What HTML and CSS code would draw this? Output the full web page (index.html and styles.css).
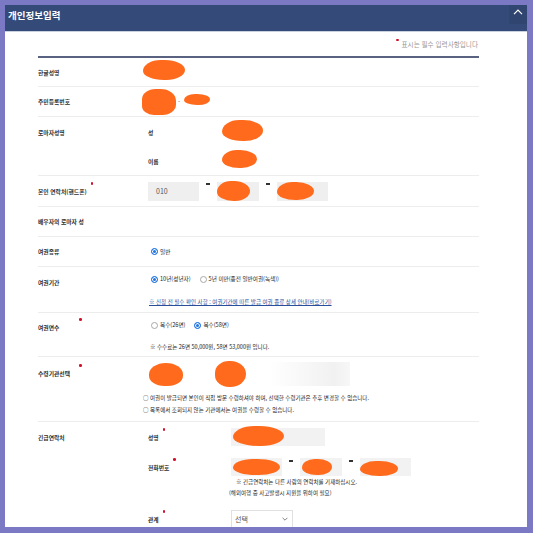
FILE: index.html
```html
<!DOCTYPE html>
<html lang="ko">
<head>
<meta charset="utf-8">
<title>개인정보입력</title>
<link rel="stylesheet" href="styles.css">
</head>
<body>
<section class="panel">
  <header class="panel-head">
    <h2 class="title">개인정보입력</h2>
    <button class="toggle" type="button" aria-label="접기">
      <svg width="10" height="6" viewBox="0 0 10 6"><path d="M1 5.2 L5 1.2 L9 5.2" fill="none" stroke="#ffffff" stroke-width="1.2"/></svg>
    </button>
  </header>
  <div class="panel-body">
    <p class="req-note"><span class="dot"></span>표시는 필수 입력사항입니다</p>
    <div class="form">
      <div class="row r1">
        <div class="label">한글성명</div>
        <div class="value"><div class="line h28"><span class="blob b-kname"></span></div></div>
      </div>
      <div class="row r2">
        <div class="label">주민등록번호</div>
        <div class="value"><div class="line h29"><span class="blob b-rrn1"></span><span class="hy">-</span><span class="blob b-rrn2"></span></div></div>
      </div>
      <div class="row r3">
        <div class="label">로마자성명</div>
        <div class="value">
          <div class="line h30"><span class="sublabel w74">성</span><span class="blob b-sur"></span></div>
          <div class="line h28"><span class="sublabel w74">이름</span><span class="blob b-given"></span></div>
        </div>
      </div>
      <div class="row r4">
        <div class="label req"><span class="txt">본인 연락처(핸드폰)</span></div>
        <div class="value">
          <div class="line h30">
            <span class="box w51"><span class="box-text">010</span></span>
            <span class="dash"></span>
            <span class="box w42"><span class="blob b-ph2"></span></span>
            <span class="dash"></span>
            <span class="box w51"><span class="blob b-ph3"></span></span>
          </div>
        </div>
      </div>
      <div class="row r5">
        <div class="label">배우자의 로마자 성</div>
        <div class="value"></div>
      </div>
      <div class="row r6">
        <div class="label">여권종류</div>
        <div class="value"><div class="line h29"><span class="radio on"></span><span class="opt">일반</span></div></div>
      </div>
      <div class="row r7">
        <div class="label">여권기간</div>
        <div class="value">
          <div class="line h24"><span class="radio on"></span><span class="opt">10년(성년자)</span><span class="radio"></span><span class="opt">5년 미만(종전 일반여권(녹색))</span></div>
          <div class="line h21"><a class="guide" href="#">※ 신청 전 필수 확인 사항 : 여권기간에 따른 발급 여권 종류 상세 안내(바로가기)</a></div>
        </div>
      </div>
      <div class="row r8">
        <div class="label req"><span class="txt">여권면수</span></div>
        <div class="value">
          <div class="line h24"><span class="radio"></span><span class="opt">복수(26면)</span><span class="radio on"></span><span class="opt">복수(58면)</span></div>
          <div class="line h19"><span class="note fee">※ 수수료는 26면 50,000원, 58면 53,000원 입니다.</span></div>
        </div>
      </div>
      <div class="row r9">
        <div class="label req"><span class="txt">수령기관선택</span></div>
        <div class="value pad9">
          <div class="line h24"><span class="office"><span class="blob b-off1"></span><span class="blob b-off2"></span></span></div>
          <div class="notes">
            <p class="note line h12 out5">○ 여권이 발급되면 본인이 직접 방문 수령하셔야 하며, 선택한 수령기관은 추후 변경할 수 없습니다.</p>
            <p class="note line h12 out5">○ 목록에서 조회되지 않는 기관에서는 여권을 수령할 수 없습니다.</p>
          </div>
        </div>
      </div>
      <div class="row r10">
        <div class="label">긴급연락처</div>
        <div class="value pad10">
          <div class="subrow h18">
            <span class="sublabel req"><span class="txt">성명</span></span>
            <span class="line"><span class="box w94 h18b"><span class="blob b-ename"></span></span></span>
          </div>
          <div class="subrow h18 gap12">
            <span class="sublabel req"><span class="txt">전화번호</span></span>
            <span class="line">
              <span class="box w51 h18b"><span class="blob b-e1"></span></span>
              <span class="dash"></span>
              <span class="box w42 h18b"><span class="blob b-e2"></span></span>
              <span class="dash"></span>
              <span class="box w51 h18b"><span class="blob b-e3"></span></span>
            </span>
          </div>
          <div class="subnotes">
            <p class="note line h11 in5">※ 긴급연락처는 다른 사람의 연락처를 기재하십시오.</p>
            <p class="note line h11 out2">(해외여행 중 사고발생시 지원을 위하여 필요)</p>
          </div>
          <div class="subrow h18 gap12">
            <span class="sublabel req"><span class="txt">관계</span></span>
            <span class="line"><span class="select"><span class="sel-text">선택</span><svg width="6" height="4" viewBox="0 0 6 4"><path d="M0.6 0.8 L3 3.2 L5.4 0.8" fill="none" stroke="#777" stroke-width="0.9"/></svg></span></span>
          </div>
        </div>
      </div>
    </div>
  </div>
</section>
</body>
</html>
```
FILE: styles.css
```css
* { box-sizing: border-box; margin: 0; padding: 0; }
html, body { height: 533px; overflow: hidden; }
body {
  background: #7b78c4;
  padding: 5px 6px 0 5px;
  font-family: "Noto Sans CJK KR", "Noto Sans", sans-serif;
  color: #333;
}
.panel {
  height: 522px;
  overflow: hidden;
  background: #fff;
  display: flex;
  flex-direction: column;
}
.panel-head {
  height: 27px;
  flex: none;
  background: #344a79;
  border-bottom: 1px solid #c9d0e0;
  display: flex;
  align-items: flex-start;
  justify-content: space-between;
}
.title {
  font-size: 9.5px;
  line-height: 12px;
  font-weight: 700;
  color: #fff;
  padding: 4px 0 0 3px;
}
.toggle {
  width: 18px;
  height: 19px;
  border: none;
  background: #30456f;
  display: flex;
  align-items: center;
  justify-content: center;
  padding-bottom: 6px;
}
.panel-body {
  flex: 1;
  overflow: hidden;
  padding: 0 48px 0 33px;
}
.req-note {
  height: 24px;
  display: flex;
  justify-content: flex-end;
  align-items: center;
  font-size: 6.6px;
  color: #999;
  padding-right: 1px;
  white-space: nowrap;
}
.req-note .dot {
  width: 2.6px;
  height: 2.6px;
  border-radius: 50%;
  background: #d0112b;
  margin: 0 3px 8px 0;
}
.form { border-top: 2px solid #5a6282; }
.row {
  display: grid;
  grid-template-columns: 110px 1fr;
  align-items: start;
  border-bottom: 1px solid #ededed;
}
.r1 { --lh: 28px; }
.r2, .r5, .r6 { --lh: 29px; }
.r3, .r4, .r7, .r10 { --lh: 30px; }
.r8 { --lh: 28px; }
.r9 { --lh: 32px; }
.label {
  height: var(--lh);
  display: flex;
  align-items: center;
  font-size: 5.8px;
  font-weight: 700;
  color: #2e2e2e;
  white-space: nowrap;
}
.label.req .txt { min-width: 37px; }
.req::after {
  content: "";
  width: 2.6px;
  height: 2.6px;
  border-radius: 50%;
  background: #d0112b;
  margin: 0 0 15px 4px;
  flex: none;
}
.line { display: flex; align-items: center; }
.h11 { height: 11px; }
.h12 { height: 12px; }
.h18 { height: 18px; }
.h19 { height: 19px; }
.h21 { height: 21px; }
.h24 { height: 24px; }
.h28 { height: 28px; }
.h29 { height: 29px; }
.h30 { height: 30px; }
.sublabel {
  font-size: 5.8px;
  font-weight: 700;
  color: #2e2e2e;
  white-space: nowrap;
  display: flex;
  align-items: center;
}
.w74 { width: 74px; }
.blob {
  display: inline-block;
  flex: none;
  background: #ff6a1c;
  border-radius: 42% 48% 45% 50% / 55% 50% 50% 45%;
}
.b-kname { width: 42px; height: 20px; margin: -4px 0 0 -5px; }
.b-rrn1 { width: 34px; height: 26px; margin-left: -6px; border-radius: 40% 45% 40% 35%; }
.b-rrn2 { width: 26px; height: 11px; margin-top: -4px; }
.hy { font-size: 6px; color: #555; margin: 0 4px 0 2px; }
.b-sur { width: 41px; height: 21px; margin-top: -4px; }
.b-given { width: 35px; height: 18px; margin-top: -4px; }
.box {
  height: 19px;
  background: #efefef;
  display: flex;
  align-items: center;
  flex: none;
}
.h18b { height: 18px; background: #f2f2f2; }
.w42 { width: 42px; }
.w51 { width: 51px; }
.w94 { width: 94px; }
.box-text { font-size: 7px; color: #555; padding-left: 8px; }
.dash {
  width: 18px;
  align-self: flex-start;
  display: flex;
  justify-content: center;
  padding-top: 2px;
  flex: none;
}
.dash::before {
  content: "";
  width: 4px;
  height: 1.6px;
  background: #333;
}
.r4 .dash { padding-top: 7px; }
.b-ph2 { width: 33px; height: 20px; margin-top: -1px; }
.b-ph3 { width: 37px; height: 18px; }
.radio {
  width: 7px;
  height: 7px;
  border-radius: 50%;
  border: 1px solid #a8a8a8;
  background: #fff;
  flex: none;
  margin: 0 2px 0 3px;
}
.radio.on {
  background: #1f74e0;
  border-color: #1f74e0;
  box-shadow: inset 0 0 0 1px #fff;
}
.opt {
  font-size: 5.6px;
  color: #222;
  white-space: nowrap;
  margin-right: 6px;
}
.guide {
  font-size: 5.5px;
  color: #2a4e9a;
  text-decoration: underline;
  white-space: nowrap;
  padding-left: 1px;
}
.note {
  font-size: 5.5px;
  color: #222;
  white-space: nowrap;
}
.fee { padding-left: 2px; }
.pad9 { padding: 5px 0 5px; }
.office {
  width: 202px;
  height: 24px;
  display: flex;
  align-items: center;
  background: linear-gradient(to right, #ffffff 60%, #f1f1f1 92%, #f7f7f7 100%);
}
.b-off1 { width: 34px; height: 23px; margin-left: 1px; border-radius: 50% 50% 45% 45%; }
.b-off2 { width: 31px; height: 26px; margin-left: 32px; border-radius: 45% 50% 50% 45%; }
.notes { margin-top: 6px; }
.out5 { margin-left: -5px; }
.out2 { margin-left: 81px; }
.in5 { margin-left: 88px; }
.pad10 { padding-top: 6px; }
.subrow {
  display: grid;
  grid-template-columns: 83px 1fr;
  align-items: stretch;
}
.subrow > .line { height: 18px; }
.gap12 { margin-top: 12px; }
.sublabel.req::after { margin: 0 0 17px 4px; }
.b-ename { width: 51px; height: 20px; margin: -2px 0 0 2px; }
.b-e1 { width: 47px; height: 16px; margin-left: 2px; }
.b-e2 { width: 30px; height: 16px; margin-left: 2px; }
.b-e3 { width: 38px; height: 15px; margin-top: 2px; }
.select {
  width: 62px;
  height: 18px;
  border: 1px solid #e0e0e0;
  display: flex;
  align-items: center;
  justify-content: space-between;
  padding: 0 4px 0 3px;
  background: #fff;
}
.sel-text { font-size: 7px; color: #555; }
```
